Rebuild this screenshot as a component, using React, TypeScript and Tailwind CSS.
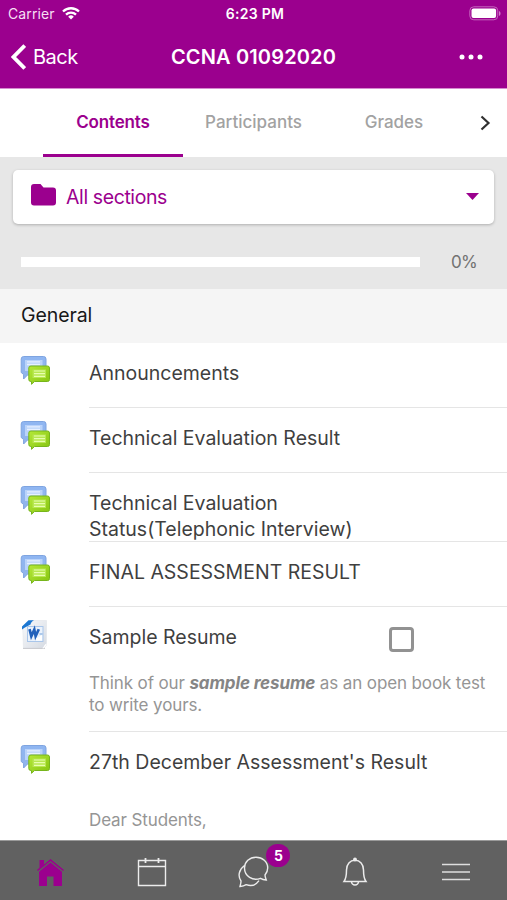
import type { ReactNode } from "react";

function ForumIcon() {
  return (
    <svg width="32" height="32" viewBox="0 0 32 32" className="block">
      <defs>
        <linearGradient id="blue" x1="0" y1="0" x2="0" y2="1">
          <stop offset="0" stopColor="#8fb6f2" />
          <stop offset="1" stopColor="#92b4ea" />
        </linearGradient>
        <linearGradient id="green" x1="0" y1="0" x2="1" y2="1">
          <stop offset="0" stopColor="#b4e838" />
          <stop offset="1" stopColor="#85c410" />
        </linearGradient>
      </defs>
      <path d="M3.500 1.500h20a2.500 2.500 0 0 1 2.500 2.500v13.500a2.500 2.500 0 0 1-2.500 2.500H7.500L3.600 24v-4.500L1.200 17.500V4a2.500 2.500 0 0 1 2.300-2.500z" fill="url(#blue)" stroke="#7ea4e0" strokeWidth="1" />
      <rect x="5" y="5" width="17.500" height="11" fill="#b9d3fa" />
      <path d="M7 6.800h13M7 9.500h13" stroke="#e6f0ff" strokeWidth="1.300" />
      <path d="M11 11h16.500a2 2 0 0 1 2 2v11.500a2 2 0 0 1-2 2H14.500L11.500 29.300v-2.800h-.7a2 2 0 0 1-2-2V13a2 2 0 0 1 2.200-2z" fill="url(#green)" stroke="#76b51c" strokeWidth="1" />
      <rect x="12.500" y="14.500" width="13.500" height="8.500" fill="#b7e750" />
      <path d="M14 16h11M14 18.700h11M14 21.300h11" stroke="#e8ffb0" strokeWidth="1.200" />
    </svg>
  );
}

function WordIcon() {
  return (
    <svg width="32" height="32" viewBox="0 0 32 32" className="block">
      <defs>
        <linearGradient id="paper" x1="0" y1="0" x2="1" y2="1">
          <stop offset="0" stopColor="#f9fafc" />
          <stop offset="1" stopColor="#d5dae2" />
        </linearGradient>
      </defs>
      <path d="M11.500 1.500H26.500V26l-3 3.500H3.500L2.800 10z" fill="url(#paper)" stroke="#e0e4ea" strokeWidth=".6" />
      <path d="M3 29.400h22" stroke="#c7c9cd" strokeWidth="1" />
      <path d="M2 10.500V7.500L8.500 1.300H14C11.500 2.500 11 4 10.500 5.500L4.500 8.800z" fill="#1b77d2" />
      <rect x="7.500" y="7.500" width="15.500" height="15" fill="#eaf2fc" stroke="#a9c6ea" />
      <path d="M9.500 10.200l1.800 7 3-6.600 1.300 6.600 3.200-7" fill="none" stroke="#2362bb" strokeWidth="2.700" />
      <path d="M16 19.500l6-3.500v5.500h-6z" fill="#fff" />
      <path d="M19.500 15h3" stroke="#6f9fda" strokeWidth="1" />
      <path d="M26.500 24.500V26l-3 3.500-1.500-.5c2.500-.8 1.500-3 4.500-4.500z" fill="#fff" />
    </svg>
  );
}

function Row({ icon, height, line = true, children }: { icon: ReactNode; height: string; line?: boolean; children: ReactNode }) {
  return (
    <li className={`flex shrink-0 pl-5 ${height}`}>
      <div className="w-[69px] shrink-0 pt-3">{icon}</div>
      <div className={`min-w-0 flex-1 whitespace-nowrap pt-[17px] ${line ? "border-b border-[#e5e5e5]" : ""}`}>{children}</div>
    </li>
  );
}

export default function App() {
  return (
    <div className="flex h-[900px] w-[507px] flex-col overflow-hidden bg-white font-['Inter',sans-serif] text-[19.5px] leading-[26px] text-[#3f3f3f]">
      <header className="h-[89px] shrink-0 border-b border-[#d68bd0] bg-[#9b008e] text-white">
        <div className="grid h-[27px] grid-cols-3 items-center pl-2 pr-[6px]">
          <div className="flex items-center gap-[7px] text-[14px] leading-5">
            <span className="tracking-[0.1px] text-[#f6dff4]">Carrier</span>
            <svg width="18" height="13" viewBox="0 0 18 13" fill="none" stroke="white" strokeWidth="2.300">
              <path d="M1 4.500a11.500 11.500 0 0 1 16 0M4 7.700a7.200 7.200 0 0 1 10 0" />
              <path d="M9 12.500L6.200 9.700a4 4 0 0 1 5.600 0z" fill="white" stroke="none" />
            </svg>
          </div>
          <span className="pl-px text-center text-[14px] font-semibold leading-5 tracking-[0.3px]">6:23 PM</span>
          <svg width="32" height="15" viewBox="0 0 32 15" className="justify-self-end">
            <rect x=".8" y=".8" width="28" height="13" rx="4" fill="none" stroke="#c565be" />
            <rect x="2.500" y="2.500" width="24.600" height="9.600" rx="2" fill="white" />
            <path d="M30 5c2 .8 2 4 0 5z" fill="#d27bcc" />
          </svg>
        </div>
        <div className="grid h-[60px] grid-cols-[130px_1fr_130px] items-center">
          <div className="flex items-center gap-[7px] pl-[11px]">
            <svg width="15" height="26" viewBox="0 0 15 26" fill="none" stroke="white" strokeWidth="3.800">
              <path d="M13.700 1.500L2.500 13l11.200 11.500" />
            </svg>
            <span className="text-[20px] tracking-[-0.500px]">Back</span>
          </div>
          <h1 className="whitespace-nowrap text-center text-[20px] font-semibold tracking-[0.15px]">CCNA 01092020</h1>
          <svg width="24" height="6" viewBox="0 0 24 6" fill="white" className="ml-[82px]">
            <circle cx="3" cy="3" r="2.500" />
            <circle cx="12" cy="3" r="2.500" />
            <circle cx="21" cy="3" r="2.500" />
          </svg>
        </div>
      </header>

      <nav className="flex h-[68px] shrink-0 pl-[43px] text-[17px] font-medium text-[#a2a2a2]">
        <span className="flex w-[140px] items-center justify-center border-b-[3px] border-[#9b008e] font-semibold tracking-[-0.15px] text-[#9b008e]">Contents</span>
        <span className="flex w-[141px] items-center justify-center pb-[3px]">Participants</span>
        <span className="flex w-[140px] items-center justify-center pb-[3px]">Grades</span>
        <span className="flex flex-1 items-center pl-4 pb-px">
          <svg width="11" height="16" viewBox="0 0 11 16" fill="none" stroke="#303030" strokeWidth="2.200">
            <path d="M1.500 1.500L8.500 8l-7 6.500" />
          </svg>
        </span>
      </nav>

      <section className="h-[132px] shrink-0 bg-[#e7e7e7] px-[13px] pt-[13px]">
        <div className="flex h-[54px] items-center rounded-[5px] bg-white pl-[18px] pr-[15px] text-[#9b008e] shadow-[0_1px_3px_rgba(0,0,0,0.25)]">
          <svg width="25" height="22" viewBox="0 0 25 22" fill="#9b008e" className="-mt-1">
            <path d="M3 0h6.500l3 3.500H22a3 3 0 0 1 3 3V18.500a3 3 0 0 1-3 3H3a3 3 0 0 1-3-3V3a3 3 0 0 1 3-3z" />
          </svg>
          <span className="ml-[10px] flex-1 tracking-[-0.400px]">All sections</span>
          <svg width="13" height="7" viewBox="0 0 13 7" fill="#9b008e" className="-mt-[2px]">
            <path d="M0 0h13L6.500 7z" />
          </svg>
        </div>
        <div className="flex items-center pl-2 pt-[25px]">
          <div className="h-[10px] w-[399px] bg-white" />
          <span className="ml-[31px] text-[17px] tracking-[-0.800px] text-[#727272]">0%</span>
        </div>
      </section>

      <h2 className="flex h-[54px] shrink-0 items-center bg-[#f5f5f5] pb-[2px] pl-[21px] tracking-[-0.1px] text-[#181818]">General</h2>

      <ul className="flex min-h-0 flex-1 flex-col overflow-hidden">
        <Row icon={<ForumIcon />} height="h-[65px]">Announcements</Row>
        <Row icon={<ForumIcon />} height="h-[65px]">Technical Evaluation Result</Row>
        <Row icon={<ForumIcon />} height="h-[69px]">
          <p>Technical Evaluation</p>
          <p>Status(Telephonic Interview)</p>
        </Row>
        <Row icon={<ForumIcon />} height="h-[65px]">FINAL ASSESSMENT RESULT</Row>
        <Row icon={<WordIcon />} height="h-[125px]">
          <div className="flex h-[29px]">
            <span className="w-[300px]">Sample Resume</span>
            <span className="mt-[3px] h-[25px] w-[25px] rounded-[4px] border-[3px] border-[#929292]" />
          </div>
          <div className="mt-[19px] text-[17px] leading-[22px] tracking-[-0.12px] text-[#959595]">
            <p>Think of our <b className="font-bold italic text-[#858585]">sample resume</b> as an open book test</p>
            <p>to write yours.</p>
          </div>
        </Row>
        <Row icon={<ForumIcon />} height="h-[140px]" line={false}>
          <p>27th December Assessment's Result</p>
          <p className="mt-[34px] text-[17px] leading-[22px] tracking-[-0.12px] text-[#959595]">Dear Students,</p>
        </Row>
      </ul>

      <footer className="grid h-[60px] shrink-0 grid-cols-5 items-center justify-items-center border-t border-[#9a9a9a] bg-[#616161] pt-[3px]">
        <svg width="28" height="29" viewBox="0 0 28 29" fill="#9b008e">
          <path d="M2.500 2H7v4.500L13.500 1 27 12l-1 1L13.500 3 1 13 0 12l2.500-2.200zM13.500 4.500L25 13.800V28h-8.500v-9.500H10V28H2V13.800z" />
        </svg>
        <svg width="30" height="30" viewBox="0 0 30 30" fill="none" stroke="#ececec" strokeWidth="1.400">
          <path d="M1.500 3.500h27v25h-27zM1.500 9.500h27" />
          <path d="M8.500 1v5M21.500 1v5" strokeWidth="1.800" />
        </svg>
        <div className="relative">
          <svg width="32" height="32" viewBox="0 0 32 32" fill="none" stroke="#ececec" strokeWidth="1.400">
            <path d="M19 1.200C25.500 1.200 30.700 6 30.700 12c0 3-1.300 5.300-2.700 7 .1 2.300.9 3.700 1.300 5-2.300-.2-4.300-.8-5.800-1.700-7.800 3.200-16-2.200-16-10.300C7.500 6 12.500 1.200 19 1.200z" />
            <path d="M7.500 9.500C2 13.500.500 20 4 25c.1 2-.5 3.800-1 5.500 2.400-.1 4.500-.7 6.200-1.800 5 1.700 9.800.3 12.800-4" />
          </svg>
          <span className="absolute left-[29px] top-[-12px] flex h-[23px] w-6 items-center justify-center rounded-full bg-[#9b008e] text-[14px] font-bold text-white">5</span>
        </div>
        <svg width="26" height="30" viewBox="0 0 26 30" fill="none" stroke="#ececec" strokeWidth="1.500">
          <path d="M2 24.500c2.500-3.500 2.500-6.500 2.500-11.500C4.500 7 8 3.300 13 3.300S21.500 7 21.500 13c0 5 0 8 2.500 11.500zM9.500 24.500a3.500 3.500 0 0 0 7 0" />
          <circle cx="13" cy="2.500" r="1.200" fill="#ececec" />
        </svg>
        <svg width="28" height="20" viewBox="0 0 28 20" stroke="#dedede" strokeWidth="1.700">
          <path d="M0 2.500h28M0 10h28M0 17.500h28" />
        </svg>
      </footer>
    </div>
  );
}
